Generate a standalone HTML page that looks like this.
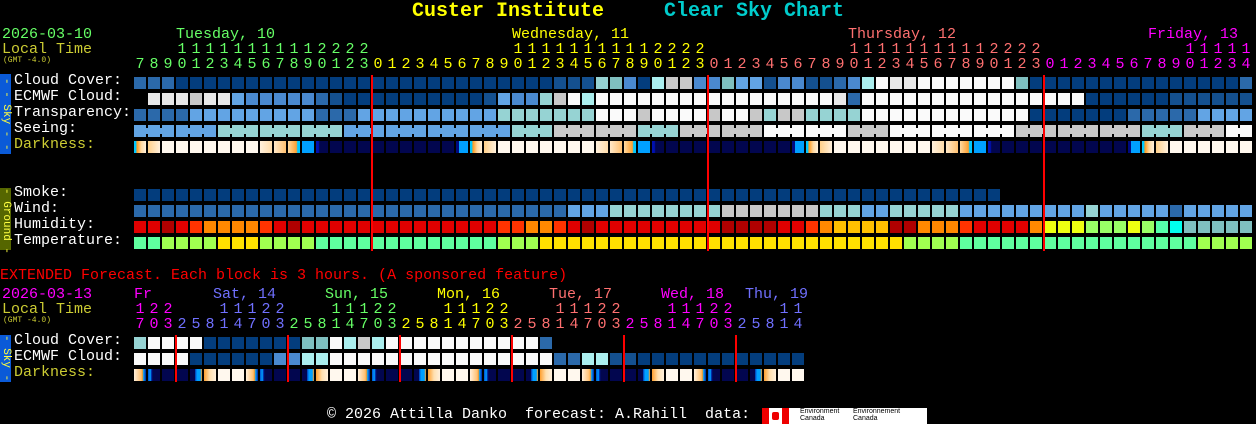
<!DOCTYPE html>
<html><head><meta charset="utf-8">
<style>
html,body{margin:0;padding:0;background:#000;width:1256px;height:424px;overflow:hidden;position:relative;font-family:"Liberation Mono",monospace;}
.t{position:absolute;white-space:pre;font-size:15px;line-height:16px;}
.c{position:absolute;width:12px;height:12px;}
.rl{position:absolute;background:#ff0000;width:2px;}
.bar{position:absolute;left:0;width:11px;color:#ffff40;font-size:11px;writing-mode:vertical-rl;text-align:center;white-space:pre;line-height:11px;}
</style></head><body>
<div class="t" style="left:412px;top:1px;font-size:20px;line-height:22px;font-weight:bold;color:#ffff00">Custer Institute</div>
<div class="t" style="left:664px;top:1px;font-size:20px;line-height:22px;font-weight:bold;color:#00cccc">Clear Sky Chart</div>

<div class="t" style="left:2px;top:27px;color:#66ff66">2026-03-10</div>
<div class="t" style="left:2px;top:42px;color:#cccc33">Local Time</div>
<div class="t" style="left:3px;top:57px;font-size:8px;line-height:8px;color:#cccc33">(GMT -4.0)</div>
<div class="t" style="left:176px;top:27px;color:#66ff66">Tuesday, 10</div>
<div class="t" style="left:512px;top:27px;color:#ffff00">Wednesday, 11</div>
<div class="t" style="left:848px;top:27px;color:#ff7070">Thursday, 12</div>
<div class="t" style="left:1148px;top:27px;color:#ff00ff">Friday, 13</div>

<div class="t" style="left:14px;top:73px;color:#fff">Cloud Cover:</div>
<div class="t" style="left:14px;top:89px;color:#fff">ECMWF Cloud:</div>
<div class="t" style="left:14px;top:105px;color:#fff">Transparency:</div>
<div class="t" style="left:14px;top:121px;color:#fff">Seeing:</div>
<div class="t" style="left:14px;top:137px;color:#cccc33">Darkness:</div>
<div class="bar" style="top:74px;height:80px;background:#0a5ad8">- - Sky - -</div>

<div class="t" style="left:14px;top:185px;color:#fff">Smoke:</div>
<div class="t" style="left:14px;top:201px;color:#fff">Wind:</div>
<div class="t" style="left:14px;top:217px;color:#fff">Humidity:</div>
<div class="t" style="left:14px;top:233px;color:#fff">Temperature:</div>
<div class="bar" style="top:188px;height:62px;background:#556600">- Ground -</div>

<div class="t" style="left:0px;top:268px;color:#ff0000">EXTENDED Forecast. Each block is 3 hours. (A sponsored feature)</div>
<div class="t" style="left:2px;top:287px;color:#ff00ff">2026-03-13</div>
<div class="t" style="left:2px;top:302px;color:#cccc33">Local Time</div>
<div class="t" style="left:3px;top:317px;font-size:8px;line-height:8px;color:#cccc33">(GMT -4.0)</div>
<div class="t" style="left:134px;top:287px;color:#ff00ff">Fr</div>
<div class="t" style="left:213px;top:287px;color:#7070ff">Sat, 14</div>
<div class="t" style="left:325px;top:287px;color:#66ff66">Sun, 15</div>
<div class="t" style="left:437px;top:287px;color:#ffff00">Mon, 16</div>
<div class="t" style="left:549px;top:287px;color:#ff7070">Tue, 17</div>
<div class="t" style="left:661px;top:287px;color:#ff00ff">Wed, 18</div>
<div class="t" style="left:745px;top:287px;color:#7070ff">Thu, 19</div>

<div class="t" style="left:14px;top:333px;color:#fff">Cloud Cover:</div>
<div class="t" style="left:14px;top:349px;color:#fff">ECMWF Cloud:</div>
<div class="t" style="left:14px;top:365px;color:#cccc33">Darkness:</div>
<div class="bar" style="top:335px;height:47px;background:#0a5ad8">- Sky -</div>

<div class="t" style="left:327px;top:407px;color:#fff">© 2026 Attilla Danko  forecast: A.Rahill  data:</div>
<div style="position:absolute;left:762px;top:408px;width:165px;height:16px;background:#fff;">
  <div style="position:absolute;left:0;top:0;width:7px;height:16px;background:#e00"></div>
  <div style="position:absolute;left:20px;top:0;width:7px;height:16px;background:#e00"></div>
  <div style="position:absolute;left:10px;top:4px;width:7px;height:8px;background:#e00;border-radius:2px"></div>
  <div style="position:absolute;left:38px;top:0;font-size:7px;line-height:7px;color:#000;font-family:'Liberation Sans',sans-serif">Environment<br>Canada</div>
  <div style="position:absolute;left:91px;top:0;font-size:7px;line-height:7px;color:#000;font-family:'Liberation Sans',sans-serif">Environnement<br>Canada</div>
</div>

<div id="g"></div>
<script>
var C={D:'#033d7d',d:'#14508f',M:'#2b69aa',L:'#4a89cf',S:'#62a4e4',T:'#96d3d3',K:'#7fbfbf',C:'#aaeeee',G:'#c8c8c8',W:'#fafafa',E:'#e8e8e8',
r:'#e00000',R:'#b00000',o:'#ff3300',O:'#ff8800',Y:'#ffc000',y:'#eeff11',g:'#99ff66',m:'#55ffaa',c:'#00ffee',
n:'#5fff9f',l:'#a0ff50',Z:'#ffe000'};
function rep(s,n){return new Array(n+1).join(s);}
var h='';
function cell(x,y,bg){h+='<div class="c" style="left:'+x+'px;top:'+y+'px;background:'+bg+'"></div>';}
function row(str,y,join){for(var i=0;i<str.length;i++){var ch=str[i];if(ch=='.')continue;cell(134+14*i,y,C[ch]);
 if(join&&i%3!=2&&i+1<str.length&&str[i+1]==ch)h+='<div class="c" style="left:'+(146+14*i)+'px;top:'+(y+3)+'px;width:2px;height:6px;background:'+C[ch]+'"></div>';}}
var cloud="MMM"+rep("D",27)+"ddd"+"TKLDCGGLLKSSdLLdd"+"MLCWEE"+rep("W",7)+"K"+rep("D",15)+"M";
var ecm=".EEEGEE"+"S"+"LLLLL"+"Md"+rep("D",10)+"dSLLTGWC"+rep("W",17)+"EM"+rep("W",16)+rep("D",6)+rep("d",6);
var tr="MMMM"+rep("S",9)+"MMM"+rep("S",10)+rep("T",7)+"WWWGWWWWGWWGTGGTT"+"TT"+rep("W",12)+rep("D",7)+rep("M",5)+rep("S",4);
var se=rep("S",6)+rep("T",9)+rep("S",12)+rep("T",3)+rep("G",6)+rep("T",3)+rep("G",6)+rep("W",6)+rep("G",3)+rep("W",9)+rep("G",9)+rep("T",3)+rep("G",3)+"WW";
var sm=rep("D",62);
var wi=rep("M",31)+"SSS"+rep("T",8)+rep("G",7)+"TT"+"T"+"SS"+rep("T",5)+rep("S",9)+"T"+rep("S",5)+"M"+rep("S",5);
var hu="rrRroOOOOorR"+rep("r",14)+"ooOOorR"+rep("r",9)+"RRRR"+"rroO"+"YYYY"+"RR"+"OOO"+"o"+"rrrr"+"O"+"yyy"+"ggg"+"y"+"g"+"m"+"c"+"KKKKK";
var te="nn"+"llll"+"ZZZ"+"llll"+rep("n",13)+"lll"+rep("Z",26)+"llll"+rep("n",17)+"llll";
row(cloud,77);row(ecm,93);row(tr,109);row(se,125,true);
row(sm,189);row(wi,205);row(hu,221);row(te,237);
var nv='#02064f',bl='#00a0ff',cr='#fff8ee',pe='linear-gradient(90deg,#ffd08a,#fff0dc)';
function dk(hr){
 if(hr==6)return 'linear-gradient(90deg,#000a80 0,#000a80 25%,'+bl+' 25%)';
 if(hr==7)return 'linear-gradient(90deg,#00c8ff 0,#00c8ff 15%,#ff9a20 25%,#ffd9a0 60%,#fff0dc)';
 if(hr==8)return pe;
 if(hr>=9&&hr<=15)return cr;
 if(hr==16)return 'linear-gradient(90deg,#fff0dc,#ffdcaa)';
 if(hr==17)return 'linear-gradient(90deg,#ffe8c8,#ffc070)';
 if(hr==18)return 'linear-gradient(90deg,#ffd9a0,#ffa030 70%,#00c8ff 80%)';
 if(hr==19)return bl;
 if(hr==20)return 'linear-gradient(90deg,#0010b0 0,#0010b0 20%,'+nv+' 30%)';
 return nv;}
for(var i=0;i<80;i++)cell(134+14*i,141,dk((7+i)%24));
var dcol=['#66ff66','#ffff00','#ff7070','#ff00ff'];
for(var i=0;i<80;i++){var t=7+i,hr=t%24,d=Math.floor(t/24),col=dcol[d];var x=134+14*i;
 h+='<div class="t" style="left:'+x+'px;top:57px;width:12px;text-align:center;color:'+col+'">'+(hr%10)+'</div>';
 if(hr>=10)h+='<div class="t" style="left:'+x+'px;top:42px;width:12px;text-align:center;color:'+col+'">'+Math.floor(hr/10)+'</div>';}
[371,707,1043].forEach(function(x){h+='<div class="rl" style="left:'+x+'px;top:75px;height:176px"></div>';});
// extended
var ecl="T"+"WWWW"+rep("D",7)+"KK"+"WCGC"+rep("W",11)+"M"+rep(".",18);
var eec="WWWW"+rep("D",6)+"LL"+"CC"+rep("W",16)+"MM"+"CC"+"dd"+rep("D",12);
row(ecl,337);row(eec,353);
function edk(hr){
 if(hr==5)return 'linear-gradient(90deg,'+nv+' 0,'+nv+' 40%,#0050d0 45%,'+bl+' 60%,'+bl+' 85%,#ff9a20)';
 if(hr==8)return 'linear-gradient(90deg,#ffa030,#ffe0b0 50%,#fff0dc)';
 if(hr==11||hr==14)return cr;
 if(hr==17)return 'linear-gradient(90deg,#fff0dc,#ffc070 60%,#ff9a20 70%,#00a0ff 80%,#0020a0)';
 if(hr==20)return 'linear-gradient(90deg,#0050d0 0,'+bl+' 20%,#0020a0 30%,'+nv+' 40%)';
 return nv;}
var ecol=['#ff00ff','#7070ff','#66ff66','#ffff00','#ff7070','#ff00ff','#7070ff'];
for(var i=0;i<48;i++){var t=17+3*i,hr=t%24,d=Math.floor(t/24),col=ecol[d];var x=134+14*i;
 cell(x,369,edk(hr));
 h+='<div class="t" style="left:'+x+'px;top:317px;width:12px;text-align:center;color:'+col+'">'+(hr%10)+'</div>';
 if(hr>=10)h+='<div class="t" style="left:'+x+'px;top:302px;width:12px;text-align:center;color:'+col+'">'+Math.floor(hr/10)+'</div>';}
for(var k=0;k<6;k++)h+='<div class="rl" style="left:'+(175+112*k)+'px;top:335px;height:47px"></div>';
document.getElementById('g').innerHTML=h;
</script>
</body></html>
